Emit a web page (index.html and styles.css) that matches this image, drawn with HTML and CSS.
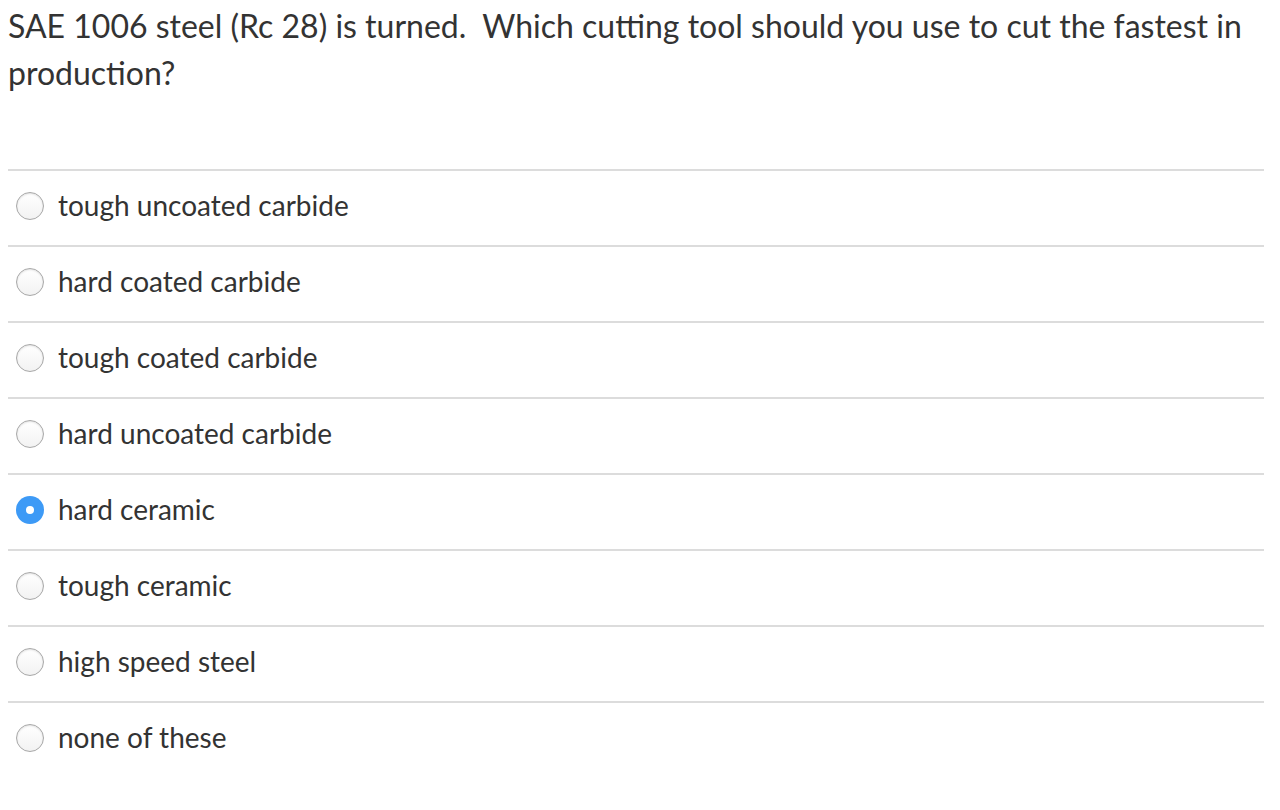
FILE: index.html
```html
<!DOCTYPE html>
<html>
<head>
<meta charset="utf-8">
<link rel="stylesheet" href="styles.css">
</head>
<body>
<div class="quiz">
  <div class="question">SAE 1006 steel (Rc 28) is turned.&nbsp; Which cutting tool should you use to cut the fastest in production?</div>
  <div class="answers">
    <label class="answer"><span class="radio"></span><span class="label">tough uncoated carbide</span></label>
    <label class="answer"><span class="radio"></span><span class="label">hard coated carbide</span></label>
    <label class="answer"><span class="radio"></span><span class="label">tough coated carbide</span></label>
    <label class="answer"><span class="radio"></span><span class="label">hard uncoated carbide</span></label>
    <label class="answer"><span class="radio checked"></span><span class="label">hard ceramic</span></label>
    <label class="answer"><span class="radio"></span><span class="label">tough ceramic</span></label>
    <label class="answer"><span class="radio"></span><span class="label">high speed steel</span></label>
    <label class="answer last"><span class="radio"></span><span class="label">none of these</span></label>
  </div>
</div>
</body>
</html>
```
FILE: styles.css
```css
html, body { background: #fff; }
body {
  margin: 0;
  padding: 0 16px 0 8px;
  font-family: Lato, "Open Sans", sans-serif;
  color: #333;
}
.question {
  font-size: 32px;
  line-height: 47px;
  padding-top: 2px;
  padding-bottom: 73px;
}
.answers {
  display: flex;
  flex-direction: column;
}
.answer {
  box-sizing: border-box;
  display: flex;
  align-items: center;
  height: 76px;
  border-top: 2px solid #dcdcdc;
  padding-left: 8px;
  padding-bottom: 4px;
  font-size: 28px;
}
.radio {
  box-sizing: border-box;
  width: 28px;
  height: 28px;
  border-radius: 50%;
  border: 1px solid #a8a8a8;
  background: linear-gradient(#fff, #f2f2f2);
  box-shadow: inset 0 1px 2px rgba(0,0,0,0.12);
  margin-right: 14px;
  flex: none;
  display: flex;
  align-items: center;
  justify-content: center;
}
.radio.checked {
  border: none;
  background: #3d9af6;
  box-shadow: none;
}
.radio.checked::after {
  content: "";
  width: 8px;
  height: 8px;
  border-radius: 50%;
  background: #fff;
}
.label { margin-top: -3px; }
```
